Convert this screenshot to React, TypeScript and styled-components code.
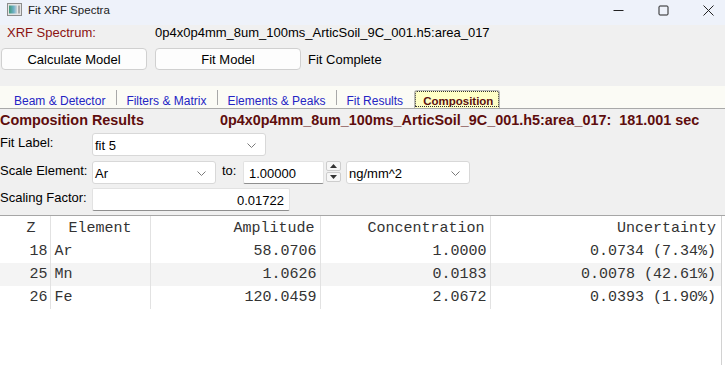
import React from "react";
import styled, { createGlobalStyle } from "styled-components";

const FILE = "0p4x0p4mm_8um_100ms_ArticSoil_9C_001.h5:area_017";

const tabs = ["Beam & Detector", "Filters & Matrix", "Elements & Peaks", "Fit Results", "Composition"];
const activeTab = 4;

const rows = [
  { z: 18, el: "Ar", amp: "58.0706", conc: "1.0000", unc: "0.0734 (7.34%)" },
  { z: 25, el: "Mn", amp: "1.0626", conc: "0.0183", unc: "0.0078 (42.61%)" },
  { z: 26, el: "Fe", amp: "120.0459", conc: "2.0672", unc: "0.0393 (1.90%)" },
];

const Chevron = () => (
  <svg width="9" height="5" viewBox="0 0 9 5">
    <path d="M0.5 0.5 L4.5 4.5 L8.5 0.5" fill="none" stroke="#7a7a7a" strokeWidth="1" />
  </svg>
);

const Select = ({ value, width }: { value: string; width: number }) => (
  <SelectBox $w={width}>
    <span>{value}</span>
    <Chevron />
  </SelectBox>
);

const App = () => {
  return (
    <Window>
      <GlobalStyle />
      <TitleBar>
        <svg width="15" height="13" viewBox="0 0 15 13">
          <defs>
            <linearGradient id="ig" x1="0" x2="1" y1="0" y2="0">
              <stop offset="0" stopColor="#3f9a7a" />
              <stop offset="0.6" stopColor="#6fb0c8" />
              <stop offset="1" stopColor="#c9d2d8" />
            </linearGradient>
          </defs>
          <rect x="0.5" y="0.5" width="14" height="12" fill="#e4e4e4" stroke="#8c8c8c" />
          <rect x="2" y="2.5" width="8" height="8" fill="url(#ig)" />
          <rect x="11" y="2.5" width="2" height="8" fill="#a9a9a9" />
        </svg>
        <Title>Fit XRF Spectra</Title>
        <WinControls>
          <WinButton>
            <svg width="11" height="11" viewBox="0 0 11 11">
              <path d="M0.5 5.5 H10.5" stroke="#222" strokeWidth="1" />
            </svg>
          </WinButton>
          <WinButton>
            <svg width="11" height="11" viewBox="0 0 11 11">
              <rect x="1" y="1" width="9" height="9" rx="1" fill="none" stroke="#222" strokeWidth="1" />
            </svg>
          </WinButton>
          <WinButton>
            <svg width="11" height="11" viewBox="0 0 11 11">
              <path d="M0.5 0.5 L10.5 10.5 M10.5 0.5 L0.5 10.5" stroke="#222" strokeWidth="1" />
            </svg>
          </WinButton>
        </WinControls>
      </TitleBar>

      <Top>
        <SpectrumRow>
          <SpectrumLabel>XRF Spectrum:</SpectrumLabel>
          <span>{FILE}</span>
        </SpectrumRow>
        <ButtonRow>
          <PushButton>Calculate Model</PushButton>
          <PushButton>Fit Model</PushButton>
          <Status>Fit Complete</Status>
        </ButtonRow>
      </Top>

      <TabStrip>
        {tabs.map((t, i) => (
          <React.Fragment key={t}>
            <Tab $active={i === activeTab}>{t}</Tab>
            {i < tabs.length - 1 && i !== activeTab && i + 1 !== activeTab && <TabSep />}
          </React.Fragment>
        ))}
      </TabStrip>

      <Panel>
        <HeadingRow>
          <Heading $w={220}>Composition Results</Heading>
          <Heading>{FILE}:  181.001 sec</Heading>
        </HeadingRow>

        <FormRow $top={2}>
          <FieldLabel>Fit Label:</FieldLabel>
          <Select value="fit 5" width={174} />
        </FormRow>

        <FormRow $top={5}>
          <FieldLabel>Scale Element:</FieldLabel>
          <Select value="Ar" width={124} />
          <ToLabel>to:</ToLabel>
          <TextInput $w={81}>1.00000</TextInput>
          <Spinner>
            <SpinHalf>
              <svg width="7" height="4" viewBox="0 0 7 4"><path d="M0 4 L3.5 0 L7 4 Z" fill="#333" /></svg>
            </SpinHalf>
            <SpinHalf>
              <svg width="7" height="4" viewBox="0 0 7 4"><path d="M0 0 L3.5 4 L7 0 Z" fill="#333" /></svg>
            </SpinHalf>
          </Spinner>
          <UnitGap />
          <Select value="ng/mm^2" width={124} />
        </FormRow>

        <FormRow $top={4}>
          <FieldLabel>Scaling Factor:</FieldLabel>
          <TextInput $w={198} $right>0.01722</TextInput>
        </FormRow>
      </Panel>

      <TableArea>
        <TableFrame>
          <Grid>
            <colgroup>
              <col style={{ width: 50 }} />
              <col style={{ width: 100 }} />
              <col style={{ width: 170 }} />
              <col style={{ width: 170 }} />
              <col style={{ width: 231 }} />
            </colgroup>
            <thead>
              <tr>
                <Th $align="right" $pad="0 14px 0 0">Z</Th>
                <Th $align="center" $pad="0">Element</Th>
                <Th $align="right" $pad="0 5px 0 0">Amplitude</Th>
                <Th $align="right" $pad="0 5px 0 0">Concentration</Th>
                <Th $align="right" $pad="0 5px 0 0">Uncertainty</Th>
              </tr>
            </thead>
            <tbody>
              {rows.map((r, i) => (
                <Row key={r.z} $alt={i % 2 === 1}>
                  <Td $align="right" $pad="0 2px 0 0">{r.z}</Td>
                  <Td $align="left" $pad="0 0 0 4px">{r.el}</Td>
                  <Td $align="right" $pad="0 3px 0 0">{r.amp}</Td>
                  <Td $align="right" $pad="0 3px 0 0">{r.conc}</Td>
                  <Td $align="right" $pad="0 5px 0 0">{r.unc}</Td>
                </Row>
              ))}
            </tbody>
          </Grid>
        </TableFrame>
      </TableArea>
    </Window>
  );
};

export default App;

const GlobalStyle = createGlobalStyle`
html, body, #root {
  margin: 0;
  padding: 0;
  height: 100%;
}
body {
  overflow: hidden;
  background: #f0f0f0;
  color: #000;
  font-family: "Liberation Sans", Arial, sans-serif;
  font-size: 13px;
}
`;

const Window = styled.div`
height: 365px;
display: flex;
flex-direction: column;
`;

const TitleBar = styled.div`
height: 25px;
flex: none;
display: flex;
align-items: flex-start;
padding-left: 7px;
background: #eef2fa;
& > svg {
  margin-top: 3px;
}
`;

const Title = styled.div`
margin-left: 6px;
font-size: 11.5px;
line-height: 20px;
color: #1a1a1a;
`;

const WinControls = styled.div`
margin-left: auto;
margin-right: -6px;
display: flex;
`;

const WinButton = styled.div`
width: 45px;
height: 20px;
display: flex;
justify-content: center;
align-items: center;
`;

const Top = styled.div`
height: 61px;
flex: none;
`;

const SpectrumRow = styled.div`
display: flex;
padding-left: 7px;
height: 16px;
line-height: 16px;
`;

const SpectrumLabel = styled.span`
width: 148px;
color: #8b1212;
`;

const ButtonRow = styled.div`
display: flex;
align-items: center;
margin-top: 7px;
padding-left: 1px;
gap: 8px;
`;

const PushButton = styled.button`
width: 146px;
height: 22px;
padding: 0;
background: #fdfdfd;
border: 1px solid #d0d0d0;
border-radius: 4px;
font-family: inherit;
font-size: 13px;
color: #000;
`;

const Status = styled.span`
margin-left: -1px;
`;

const TabStrip = styled.div`
height: 22px;
flex: none;
display: flex;
align-items: flex-end;
padding-left: 5px;
background: #fbfbf5;
border-bottom: 1px solid #a9a9a9;
font-size: 12px;
`;

const Tab = styled.div<{ $active: boolean }>`
height: 18px;
box-sizing: border-box;
display: flex;
align-items: flex-end;
line-height: 13px;
padding: ${(p) => (p.$active ? "0 6px 0 8px" : "0 11px 0 9px")};
color: ${(p) => (p.$active ? "#5a1010" : "#2424c4")};
font-size: ${(p) => (p.$active ? "11.5px" : "12px")};
font-weight: ${(p) => (p.$active ? "bold" : "normal")};
background: ${(p) => (p.$active ? "#ffffc6" : "transparent")};
border: ${(p) => (p.$active ? "1px solid #b8b8b8" : "none")};
border-bottom: none;
border-radius: 3px 3px 0 0;
outline: ${(p) => (p.$active ? "1px dotted #333" : "none")};
outline-offset: -2px;
`;

const TabSep = styled.div`
width: 1px;
height: 15px;
margin-bottom: 3px;
background: #a8a8a8;
`;

const Panel = styled.div`
flex: none;
padding-bottom: 4px;
`;

const HeadingRow = styled.div`
display: flex;
height: 22px;
line-height: 22px;
`;

const Heading = styled.div<{ $w?: number }>`
width: ${(p) => (p.$w ? `${p.$w}px` : "auto")};
white-space: pre;
font-weight: bold;
font-size: 14.4px;
color: #5e0d0d;
`;

const FormRow = styled.div<{ $top: number }>`
display: flex;
align-items: flex-start;
margin-top: ${(p) => p.$top}px;
`;

const FieldLabel = styled.div`
width: 92px;
line-height: 20px;
`;

const SelectBox = styled.div<{ $w: number }>`
width: ${(p) => p.$w}px;
height: 23px;
box-sizing: border-box;
display: flex;
align-items: center;
justify-content: space-between;
padding: 1px 9px 0 2px;
background: #fff;
border: 1px solid #d8d8d8;
border-radius: 3px;
`;

const ToLabel = styled.div`
margin-left: 6px;
width: 21px;
line-height: 20px;
`;

const TextInput = styled.div<{ $w: number; $right?: boolean }>`
width: ${(p) => p.$w}px;
height: 23px;
box-sizing: border-box;
padding: 1px 5px 0;
display: flex;
align-items: center;
justify-content: ${(p) => (p.$right ? "flex-end" : "flex-start")};
background: #fff;
border: 1px solid #e2e2e2;
border-bottom-color: #8f8f8f;
border-radius: 2px;
`;

const Spinner = styled.div`
margin-left: 2px;
width: 15px;
height: 21px;
display: flex;
flex-direction: column;
gap: 1px;
`;

const SpinHalf = styled.div`
flex: 1;
display: flex;
align-items: center;
justify-content: center;
background: #f7f7f7;
border: 1px solid #cdcdcd;
border-radius: 2px;
`;

const UnitGap = styled.div`
width: 5px;
`;

const TableArea = styled.div`
flex: 1;
display: flex;
background: #fff;
border-top: 1px solid #a6a6a6;
`;

const TableFrame = styled.div`
width: 721px;
border-right: 1px solid #d2d2d2;
`;

const Grid = styled.table`
width: 721px;
table-layout: fixed;
border-collapse: collapse;
font-family: "Liberation Mono", "Courier New", monospace;
font-size: 15px;
color: #333;
`;

const Th = styled.th<{ $align: string; $pad: string }>`
height: 24px;
padding: ${(p) => p.$pad};
text-align: ${(p) => p.$align};
font-weight: normal;
border-right: 1px solid #e2e2e2;
&:last-child {
  border-right: none;
}
`;

const Row = styled.tr<{ $alt: boolean }>`
background: ${(p) => (p.$alt ? "#f4f4f4" : "#fff")};
`;

const Td = styled.td<{ $align: string; $pad: string }>`
height: 23px;
padding: ${(p) => p.$pad};
text-align: ${(p) => p.$align};
white-space: pre;
border-right: 1px solid #e2e2e2;
&:last-child {
  border-right: none;
}
`;
